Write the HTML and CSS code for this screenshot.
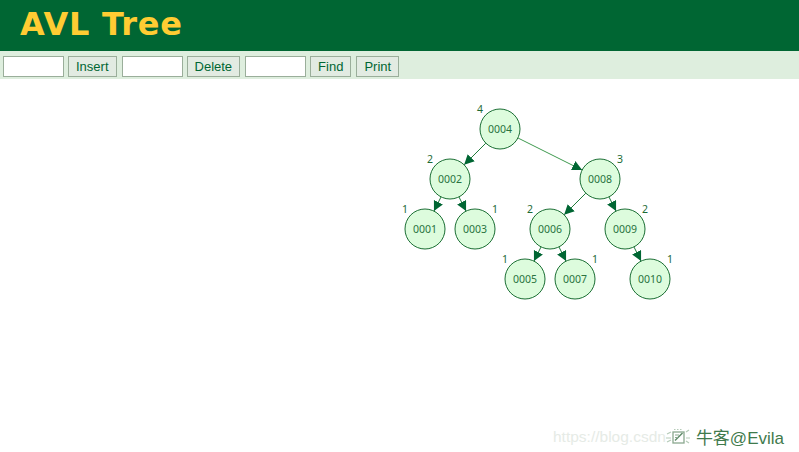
FILE: index.html
```html
<!DOCTYPE html>
<html>
<head>
<meta charset="utf-8">
<title>AVL Tree</title>
<link rel="stylesheet" href="styles.css">
</head>
<body>
<header class="header">
  <h1 class="title">AVL Tree</h1>
</header>
<div class="toolbar">
  <input class="field" type="text">
  <button class="btn">Insert</button>
  <input class="field" type="text">
  <button class="btn">Delete</button>
  <input class="field" type="text">
  <button class="btn">Find</button>
  <button class="btn">Print</button>
</div>
<svg class="canvas" width="799" height="373" viewBox="0 79 799 373" xmlns="http://www.w3.org/2000/svg">
  <defs>
    <marker id="arrow" markerUnits="userSpaceOnUse" markerWidth="11" markerHeight="11" refX="10" refY="5" orient="auto">
      <path d="M0,0 L10,5 L0,10 z" fill="#006633"/>
    </marker>
  </defs>
  <g class="edges" marker-end="url(#arrow)">
    <line x1="485.86" y1="143.14" x2="464.14" y2="164.86"/>
    <line class="light" x1="517.89" y1="137.94" x2="582.11" y2="170.06"/>
    <line x1="441.06" y1="196.89" x2="433.94" y2="211.11"/>
    <line x1="458.94" y1="196.89" x2="466.06" y2="211.11"/>
    <line x1="585.86" y1="193.14" x2="564.14" y2="214.86"/>
    <line x1="608.94" y1="196.89" x2="616.06" y2="211.11"/>
    <line x1="541.06" y1="246.89" x2="533.94" y2="261.11"/>
    <line x1="558.94" y1="246.89" x2="566.06" y2="261.11"/>
    <line x1="633.94" y1="246.89" x2="641.06" y2="261.11"/>
  </g>
  <g class="nodes">
    <circle cx="500" cy="129" r="20"/><text x="500" y="133">0004</text>
    <circle cx="450" cy="179" r="20"/><text x="450" y="183">0002</text>
    <circle cx="600" cy="179" r="20"/><text x="600" y="183">0008</text>
    <circle cx="425" cy="229" r="20"/><text x="425" y="233">0001</text>
    <circle cx="475" cy="229" r="20"/><text x="475" y="233">0003</text>
    <circle cx="550" cy="229" r="20"/><text x="550" y="233">0006</text>
    <circle cx="625" cy="229" r="20"/><text x="625" y="233">0009</text>
    <circle cx="525" cy="279" r="20"/><text x="525" y="283">0005</text>
    <circle cx="575" cy="279" r="20"/><text x="575" y="283">0007</text>
    <circle cx="650" cy="279" r="20"/><text x="650" y="283">0010</text>
  </g>
  <g class="heights">
    <text x="477" y="113">4</text>
    <text x="427" y="163">2</text>
    <text x="617" y="163">3</text>
    <text x="402" y="213">1</text>
    <text x="492" y="213">1</text>
    <text x="527" y="213">2</text>
    <text x="642" y="213">2</text>
    <text x="502" y="263">1</text>
    <text x="592" y="263">1</text>
    <text x="667" y="263">1</text>
  </g>
</svg>
<div class="watermark">
  <span class="wm-url">https://blog.csdn</span>
  <svg class="wm-icon" width="26" height="20" viewBox="0 0 26 20" xmlns="http://www.w3.org/2000/svg">
    <rect x="8" y="5" width="11" height="11" fill="none" stroke="#8aa88f" stroke-width="1.3"/>
    <path d="M10 13.5 L17.5 6" stroke="#5f8a68" stroke-width="1.5"/>
    <path d="M10 8 h4 M10 10.5 h3" stroke="#8aa88f" stroke-width="1"/>
    <path d="M2 7 L6 5 M1 11 L6 11 M2 15 L6 13 M21 5 L24 3 M21 11 L25 11 M21 14 L24 16" stroke="#b5cbb8" stroke-width="1.2"/>
    <path d="M9 2.5 h9" stroke="#b5cbb8" stroke-width="1.2" stroke-dasharray="1.5 1.5"/>
  </svg>
  <span class="wm-name">牛客@Evila</span>
</div>
</body>
</html>
```
FILE: styles.css
```css
html, body {
  margin: 0;
  padding: 0;
  background: #ffffff;
  width: 799px;
  height: 452px;
  overflow: hidden;
  position: relative;
}

.header {
  background: #006633;
  height: 51px;
  padding-left: 20px;
  box-sizing: border-box;
}

.title {
  margin: 0;
  font-family: "DejaVu Sans", Verdana, sans-serif;
  font-weight: bold;
  font-size: 32px;
  letter-spacing: 0.8px;
  line-height: 48px;
  color: #ffcc33;
}

.toolbar {
  background: #deeede;
  height: 28px;
  box-sizing: border-box;
  padding: 5px 0 0 3px;
  display: flex;
  align-items: flex-start;
}

.field {
  width: 61px;
  height: 21px;
  box-sizing: border-box;
  border: 1px solid #9aae9a;
  background: #ffffff;
  margin: 0 4px 0 0;
  padding: 0 2px;
  font-family: "Liberation Sans", Arial, sans-serif;
  font-size: 13px;
  outline: none;
}

.btn {
  height: 21px;
  box-sizing: border-box;
  border: 1px solid #9aae9a;
  background: #e2ebe2;
  color: #006633;
  font-family: "Liberation Sans", Arial, sans-serif;
  font-size: 13px;
  line-height: 19px;
  padding: 0 7px;
  margin: 0 5px 0 0;
  cursor: pointer;
}

.canvas {
  display: block;
}

.edges line {
  stroke: #1f7a3a;
  stroke-width: 1;
}

.edges line.light {
  stroke: #3f9a4f;
}

.nodes circle {
  fill: #ddfcdd;
  stroke: #1a6e33;
  stroke-width: 1;
}

.nodes text {
  font-family: "Noto Sans", "Open Sans", sans-serif;
  font-size: 10.5px;
  fill: #2a7340;
  text-anchor: middle;
}

.heights text {
  font-family: "Noto Sans", "Open Sans", sans-serif;
  font-size: 10.5px;
  fill: #1e6b35;
}

.watermark {
  position: absolute;
  left: 553px;
  top: 424px;
  display: flex;
  align-items: center;
  white-space: nowrap;
}

.wm-url {
  font-family: "Liberation Sans", Arial, sans-serif;
  font-size: 15.5px;
  color: #e6ebe6;
}

.wm-icon {
  display: block;
  margin: 0 5px 0 -1px;
}

.wm-name {
  font-family: "Liberation Sans", "Noto Sans CJK SC", sans-serif;
  font-size: 17px;
  color: #3f7a4c;
}
```
